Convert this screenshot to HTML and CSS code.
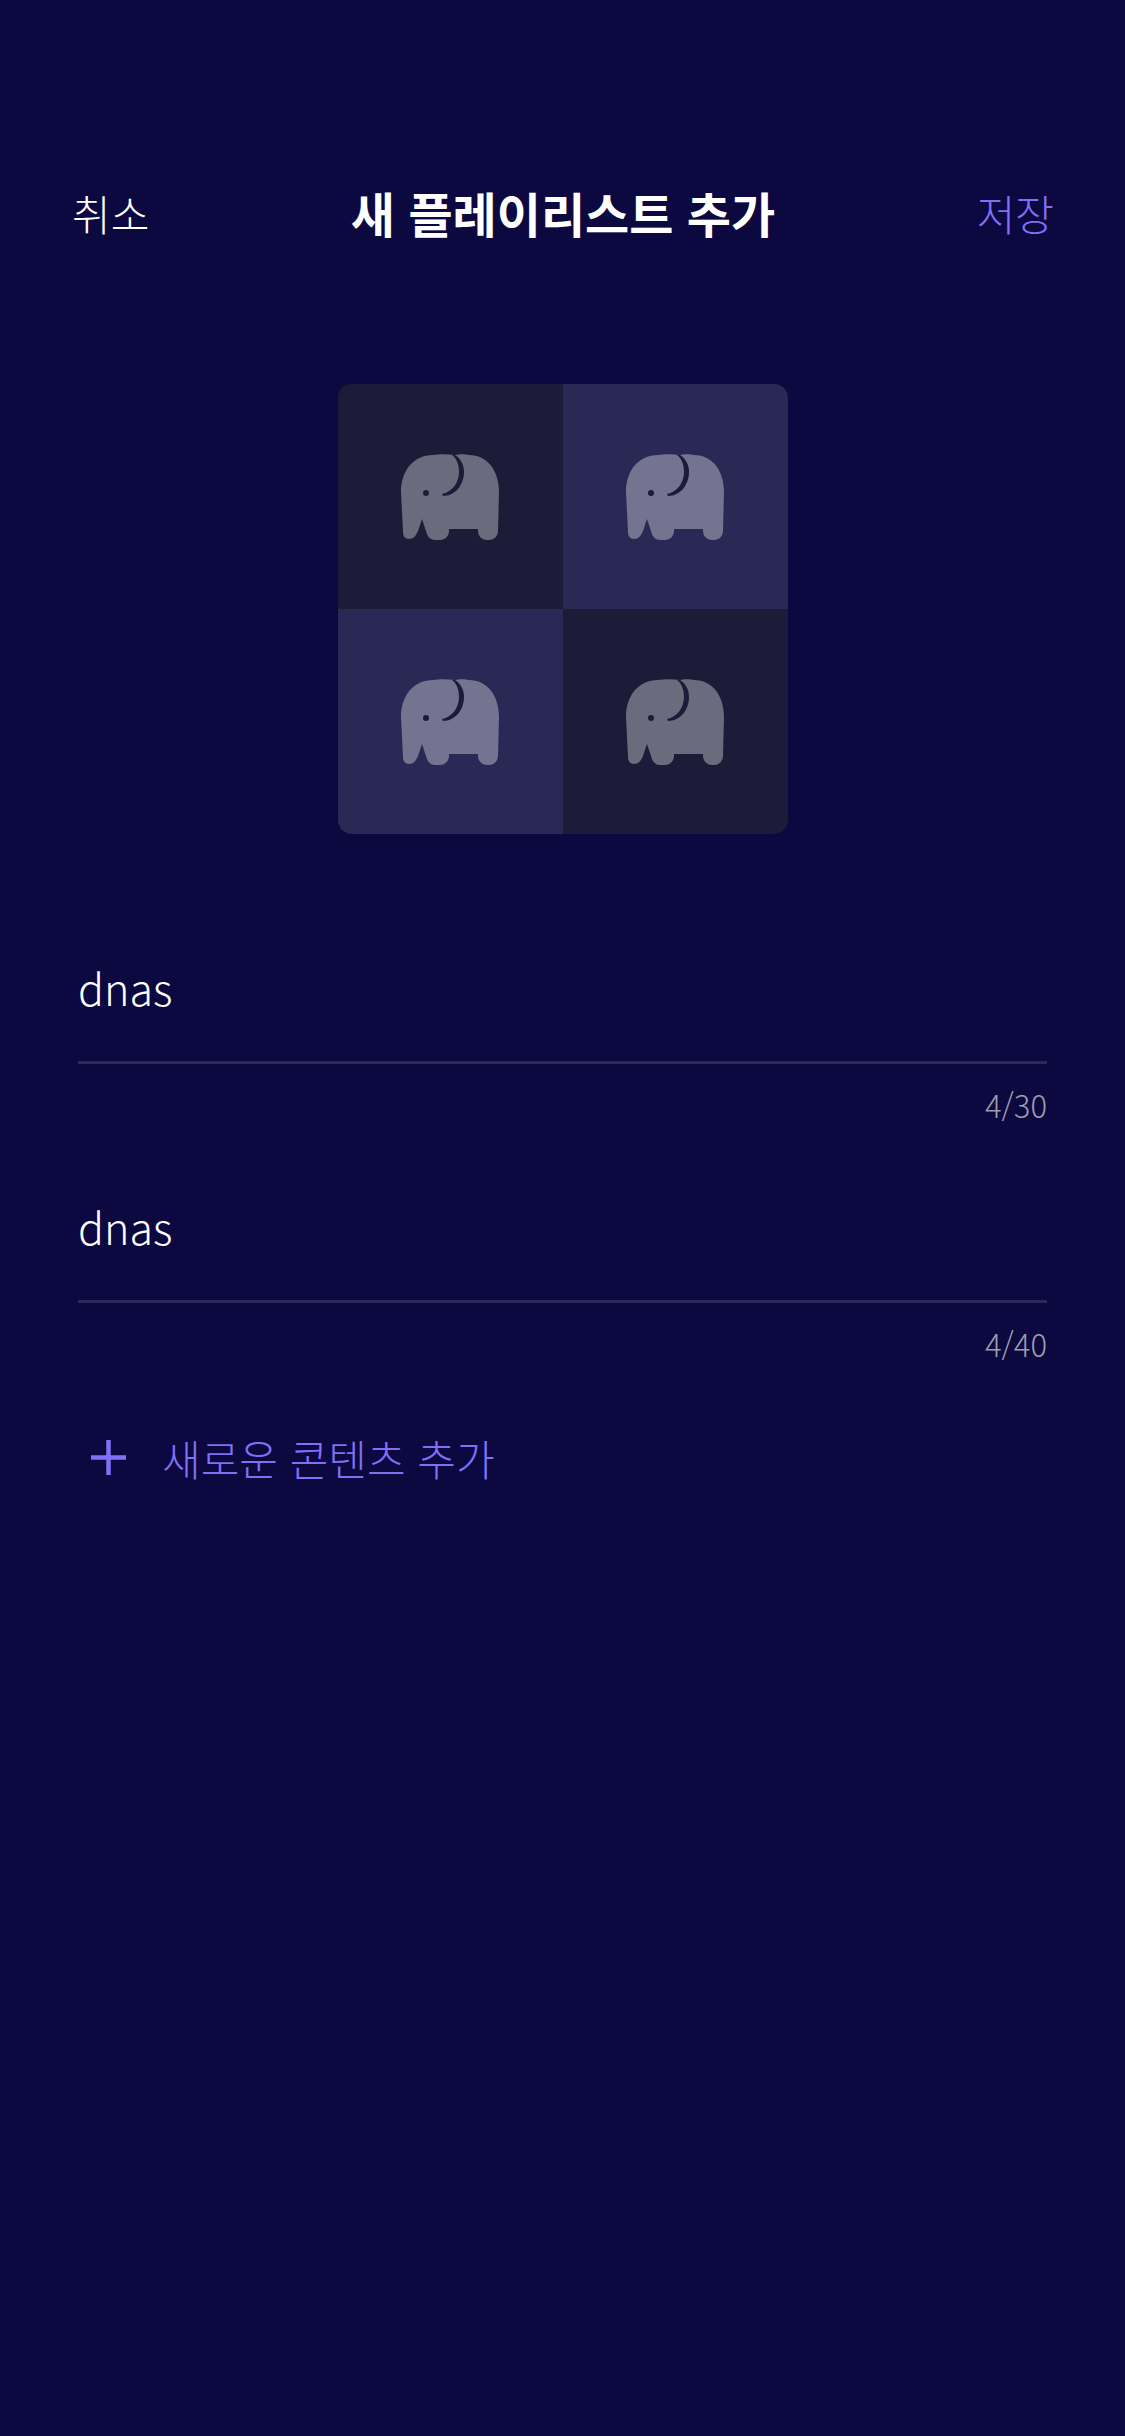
FILE: index.html
```html
<!doctype html>
<html lang="ko">
 <head>
	<meta charset="UTF-8">
	<title>새 플레이리스트 추가</title>
	<link rel="stylesheet" href="styles.css">
 </head>
 <body>
	<svg class="defs" width="0" height="0">
		<symbol id="elephant" viewBox="0 0 98 86">
			<path class="ele_body" d="M32 1C38 0 46 0 54 1C58 0 64 0 68 1C86 1 98 16 98 38L97 77C97 82 93 86 88 86H86C81 86 77 82 77 77V75H48V77C48 82 44 86 39 86H34C29 86 26 82 25 77L21 65L17 77C15 82 12 85 8 85C4 85 2 82 2 78L0 38C0 16 13 1 32 1Z"/>
			<path class="ele_ear" d="M54 1C60 5 63 11 63 18C63 31 54 42 42 42L41 40C51 38 58 29 58 18C58 11 56 5 51 1Z"/>
			<circle class="ele_eye" cx="25" cy="39" r="3"/>
		</symbol>
	</svg>
	<div class="header">
		<span class="cancel">취소</span>
		<h2>새 플레이리스트 추가</h2>
		<span class="save">저장</span>
	</div>
	<div class="cover">
		<div class="tile dark"><svg class="elephant"><use href="#elephant"/></svg></div>
		<div class="tile light"><svg class="elephant"><use href="#elephant"/></svg></div>
		<div class="tile light"><svg class="elephant"><use href="#elephant"/></svg></div>
		<div class="tile dark"><svg class="elephant"><use href="#elephant"/></svg></div>
	</div>
	<form>
		<div class="field">
			<div class="value">dnas</div>
			<div class="count">4/30</div>
		</div>
		<div class="field">
			<div class="value">dnas</div>
			<div class="count">4/40</div>
		</div>
	</form>
	<div class="add">
		<svg class="plus" viewBox="0 0 35 35"><path d="M0 17.500H35M17.500 0V35"/></svg>
		<span>새로운 콘텐츠 추가</span>
	</div>
 </body>
</html>
```

FILE: styles.css
```css
html,body{margin:0;padding:0}
body{
	width:1125px;height:2436px;overflow:hidden;
	background:#0c0840;color:#fff;
	font-family:"Noto Sans CJK KR","Noto Sans",sans-serif;
}
.defs{display:block;height:0}

/* 상단 바 */
.header{
	display:flex;justify-content:space-between;align-items:center;
	height:80px;
	margin:172px 71px 0 72px;
	font-size:42px;font-weight:300;
}
.header h2{margin:0;font-size:48px;font-weight:700}
.save{color:#8070f5}

/* 커버 4칸 */
.cover{
	display:grid;grid-template-columns:225px 225px;grid-template-rows:225px 225px;
	width:450px;
	margin:132px auto 0;
	border-radius:14px;overflow:hidden;
}
.tile{display:flex;align-items:center;justify-content:center}
.dark{background:#1c1c38}
.light{background:#2a2855}
.elephant{width:98px;height:86px}
.ele_body{fill:#fff;fill-opacity:.35}
.ele_ear,.ele_eye{fill:#1c1c38}
.light .ele_ear,.light .ele_eye{fill:#2a2855}

/* 입력 */
form{margin:0 78px;padding-top:80px}
.field{height:239px}
.value{
	height:147px;line-height:146px;
	font-size:43px;font-weight:300;
	border-bottom:3px solid #2c2858;
}
.count{
	margin-top:18px;
	text-align:right;
	font-size:31px;font-weight:300;color:#a09dae;
}

/* 콘텐츠 추가 */
.add{
	display:flex;align-items:center;gap:36px;
	margin:35px 0 0 91px;
	font-size:42px;font-weight:300;color:#8070f5;
}
.plus{width:35px;height:35px;fill:none;stroke:#8070f5;stroke-width:4.500}
```
